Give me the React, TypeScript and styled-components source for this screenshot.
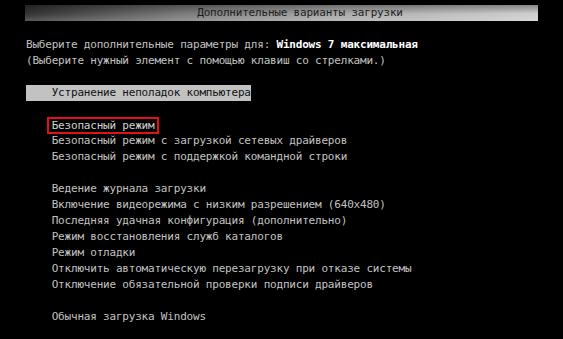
import React from 'react';
import styled, { createGlobalStyle } from 'styled-components';

const Global = createGlobalStyle`
  html, body { margin: 0; padding: 0; background: #000; }
  body { width: 563px; height: 339px; overflow: hidden; }
`;

const Screen = styled.div`
  width: 563px;
  height: 339px;
  box-sizing: border-box;
  background: #000;
  padding: 5px 25px 0 26px;
  display: flex;
  flex-direction: column;
  font-family: "DejaVu Sans Mono", "Liberation Mono", monospace;
  font-size: 11px;
  letter-spacing: -0.2px;
  color: #c2c2c2;
  white-space: pre;
`;

const TitleBar = styled.div`
  height: 16px;
  line-height: 16px;
  margin-left: -1px;
  padding-left: 37px;
  text-align: center;
  color: #1e1e1e;
  background:
    linear-gradient(to bottom, rgba(0, 0, 0, 0.35), rgba(0, 0, 0, 0) 55%, rgba(255, 255, 255, 0.18)),
    linear-gradient(to right, #333 0%, #7a7a7a 30%, #a8a8a8 60%, #cfcfcf 100%);
`;

const Row = styled.div<{ $indent?: boolean }>`
  height: 16px;
  line-height: 16px;
  padding-left: ${(p) => (p.$indent ? '25.7px' : '0')};
`;

const Gap = styled.div`
  height: 16px;
  flex: none;
`;

const Highlight = styled.div`
  align-self: flex-start;
  height: 16px;
  line-height: 16px;
  background: #c2c2c2;
  color: #111;
`;

const Bright = styled.span`
  color: #fff;
  font-weight: bold;
`;

const Marked = styled.span`
  display: inline-block;
  line-height: 13px;
  padding: 0 3px;
  margin: 0 -5px 0 -3px;
  outline: 2px solid #e3101c;
  outline-offset: 0;
  vertical-align: middle;
  color: #d2d2d2;
`;

export default function App() {
  return (
    <>
      <Global />
      <Screen>
        <TitleBar>Дополнительные варианты загрузки</TitleBar>
        <Gap />
        <Row>
          Выберите дополнительные параметры для: <Bright>Windows 7 максимальная</Bright>
        </Row>
        <Row>(Выберите нужный элемент с помощью клавиш со стрелками.)</Row>
        <Gap />
        <Highlight>{'    Устранение неполадок компьютера'}</Highlight>
        <Gap />
        <Row $indent>
          <Marked>Безопасный режим</Marked>
        </Row>
        <Row $indent>Безопасный режим с загрузкой сетевых драйверов</Row>
        <Row $indent>Безопасный режим с поддержкой командной строки</Row>
        <Gap />
        <Row $indent>Ведение журнала загрузки</Row>
        <Row $indent>Включение видеорежима с низким разрешением (640x480)</Row>
        <Row $indent>Последняя удачная конфигурация (дополнительно)</Row>
        <Row $indent>Режим восстановления служб каталогов</Row>
        <Row $indent>Режим отладки</Row>
        <Row $indent>Отключить автоматическую перезагрузку при отказе системы</Row>
        <Row $indent>Отключение обязательной проверки подписи драйверов</Row>
        <Gap />
        <Row $indent>Обычная загрузка Windows</Row>
      </Screen>
    </>
  );
}
